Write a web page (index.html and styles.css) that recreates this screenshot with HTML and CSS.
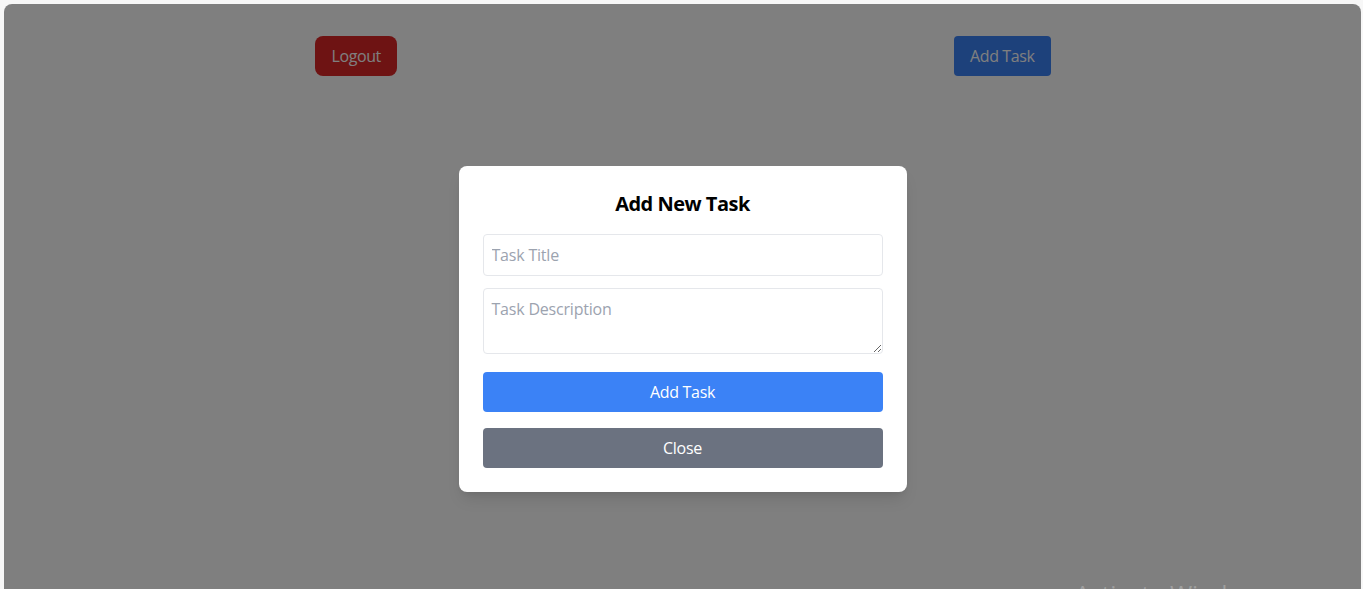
FILE: index.html
```html
<!DOCTYPE html>
<html lang="en">
<head>
<meta charset="utf-8">
<title>Tasks</title>
<link rel="stylesheet" href="styles.css">
</head>
<body>
<div class="window">
  <div class="app">
    <header class="toolbar">
      <button class="btn btn-logout">Logout</button>
      <button class="btn btn-add">Add Task</button>
    </header>
  </div>
  <div class="overlay">
    <div class="modal">
      <h2 class="modal-title">Add New Task</h2>
      <input class="field" type="text" placeholder="Task Title">
      <textarea class="field field-area" rows="2" placeholder="Task Description"></textarea>
      <button class="modal-btn modal-btn-primary">Add Task</button>
      <button class="modal-btn modal-btn-secondary">Close</button>
    </div>
  </div>
  <div class="watermark">Activate Windows</div>
</div>
</body>
</html>
```

FILE: styles.css
```css
* { box-sizing: border-box; }
html, body { margin: 0; height: 100%; }
body {
  background: #f7f7f7;
  font-family: "Open Sans", "Noto Sans", sans-serif;
  overflow: hidden;
}
.window {
  position: relative;
  margin: 4px 2px 0 4px;
  height: calc(100vh - 4px);
  background: #ffffff;
  border-radius: 8px 8px 0 0;
  overflow: hidden;
}
.app { width: 100%; }
.toolbar {
  max-width: 768px;
  margin: 0 auto;
  padding: 32px 16px;
  display: flex;
  justify-content: space-between;
  align-items: center;
}
.btn {
  font-family: inherit;
  font-size: 16px;
  line-height: 24px;
  padding: 8px 16px;
  border: 0;
  border-radius: 8px;
  color: #ffffff;
  letter-spacing: -0.4px;
  cursor: pointer;
}
.btn-logout { background: #dc2626; padding: 8px 16px 8px 17px; }
.btn-add { background: #3b82f6; border-radius: 4px; }
.overlay {
  position: absolute;
  inset: 0;
  background: rgba(0, 0, 0, 0.5);
  display: flex;
  justify-content: center;
  align-items: flex-start;
  padding-top: 162px;
}
.modal {
  width: 448px;
  background: #ffffff;
  border-radius: 8px;
  padding: 24px;
  display: flex;
  flex-direction: column;
  box-shadow: 0 10px 15px -3px rgba(0,0,0,0.1), 0 4px 6px -4px rgba(0,0,0,0.1);
}
.modal-title {
  margin: 0 0 16px;
  font-size: 20px;
  line-height: 28px;
  font-weight: 700;
  letter-spacing: -0.5px;
  text-align: center;
  color: #000;
}
.field {
  display: block;
  width: 100%;
  font-family: inherit;
  font-size: 16px;
  line-height: 24px;
  padding: 8px;
  border: 1px solid #e5e7eb;
  border-radius: 4px;
  margin: 0 0 12px;
  color: #111827;
  background: #fff;
  letter-spacing: -0.2px;
}
.field::placeholder { color: #9ca3af; }
.field-area {
  height: 66px;
  padding: 8px;
  resize: vertical;
  margin-bottom: 18px;
}
.modal-btn {
  font-family: inherit;
  font-size: 16px;
  line-height: 24px;
  padding: 8px 16px;
  border: 0;
  border-radius: 4px;
  color: #fff;
  width: 100%;
  letter-spacing: -0.3px;
}
.modal-btn-primary { background: #3b82f6; margin-bottom: 16px; }
.modal-btn-secondary { background: #6b7280; }
.watermark {
  position: absolute;
  left: 1071px;
  top: 573px;
  font-size: 24px;
  color: rgba(255,255,255,0.25);
  white-space: nowrap;
  pointer-events: none;
}
```
